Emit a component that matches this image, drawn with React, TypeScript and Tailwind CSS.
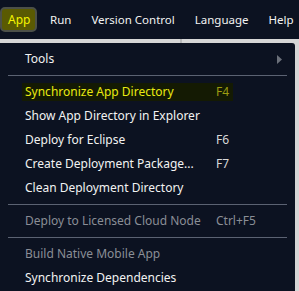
import { ReactNode } from 'react';

// 메뉴 항목 정의
type Item =
  | { kind: 'sep' }
  | { kind: 'item'; label: string; shortcut?: string; disabled?: boolean; active?: boolean; submenu?: boolean };

const items: Item[] = [
  { kind: 'item', label: 'Tools', submenu: true },
  { kind: 'sep' },
  { kind: 'item', label: 'Synchronize App Directory', shortcut: 'F4', active: true },
  { kind: 'item', label: 'Show App Directory in Explorer' },
  { kind: 'item', label: 'Deploy for Eclipse', shortcut: 'F6' },
  { kind: 'item', label: 'Create Deployment Package...', shortcut: 'F7' },
  { kind: 'item', label: 'Clean Deployment Directory' },
  { kind: 'sep' },
  { kind: 'item', label: 'Deploy to Licensed Cloud Node', shortcut: 'Ctrl+F5', disabled: true },
  { kind: 'sep' },
  { kind: 'item', label: 'Build Native Mobile App', disabled: true },
  { kind: 'item', label: 'Synchronize Dependencies' },
];

const topMenus = ['Run', 'Version Control', 'Language', 'Help'];

function Row({ children, active }: { children: ReactNode; active?: boolean }) {
  return (
    <div className="h-6 flex items-center pl-[22px]">
      <div className={`h-[18px] w-[211px] flex items-center pl-[3px] ${active ? 'bg-[#141a03]' : ''}`}>
        {children}
      </div>
    </div>
  );
}

export default function App() {
  return (
    <div className="w-[299px] h-[291px] overflow-hidden bg-[#d6d6d6] text-[12px] font-['Noto_Sans',sans-serif]">
      {/* 상단 메뉴바 */}
      <div className="h-[39px] bg-[#0c1221] flex items-center text-[#f2f2f2] text-[11.5px] whitespace-nowrap">
        <div className="h-[25px] w-[37px] pl-[6px] rounded-[5px] bg-[#5a5a02] border-2 border-[#4c5048] text-[#f5f500] text-[12px] flex items-center shrink-0">
          App
        </div>
        <div className="flex gap-[20px] ml-[13px]">
          {topMenus.map((m) => (
            <span key={m}>{m}</span>
          ))}
        </div>
      </div>

      {/* 메뉴 뒤 배경 */}
      <div className="h-[4px] flex">
        <div className="w-[180px]" />
        <div className="w-[2px] bg-[#b8b8b8]" />
      </div>

      {/* 드롭다운 */}
      <div className="flex">
        <div className="w-[295px] h-[248px] bg-[#0c1221] rounded-tr-[3px] pt-[4px] text-[#f2f2f2]">
          {items.map((it, i) =>
            it.kind === 'sep' ? (
              <div key={i} className="h-[9px] flex items-center px-2">
                <div className="h-px w-full bg-[#5b6272]" />
              </div>
            ) : (
              <Row key={i} active={it.active}>
                <span
                  className={`w-[191px] shrink-0 whitespace-nowrap ${
                    it.active ? 'text-[#eaea10]' : it.disabled ? 'text-[#8a8e96]' : ''
                  }`}
                >
                  {it.label}
                </span>
                {it.shortcut && (
                  <span
                    className={`whitespace-nowrap shrink-0 ${
                      it.active ? 'text-[#9c9c12]' : it.disabled ? 'text-[#8a8e96]' : 'text-[#d8d8d8]'
                    }`}
                  >
                    {it.shortcut}
                  </span>
                )}
                {it.submenu && (
                  <svg className="ml-[61px] shrink-0" width="5" height="9" viewBox="0 0 5 9">
                    <path d="M0 0 L5 4.5 L0 9 Z" fill="#6b707a" />
                  </svg>
                )}
              </Row>
            ),
          )}
        </div>
      </div>
    </div>
  );
}
